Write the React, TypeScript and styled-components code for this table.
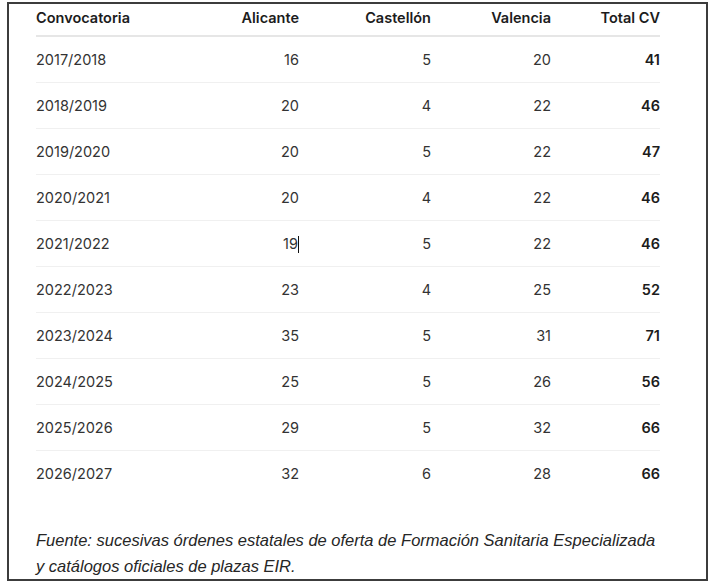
import React from "react";
import styled, { createGlobalStyle } from "styled-components";

const GlobalStyle = createGlobalStyle`
  html, body {
    margin: 0;
    padding: 0;
    background: #ffffff;
  }
  body {
    font-family: Inter, "Noto Sans", "Liberation Sans", sans-serif;
    color: #2b2b2b;
  }
`;

const rows = [
  ["2017/2018", 16, 5, 20, 41],
  ["2018/2019", 20, 4, 22, 46],
  ["2019/2020", 20, 5, 22, 47],
  ["2020/2021", 20, 4, 22, 46],
  ["2021/2022", 19, 5, 22, 46],
  ["2022/2023", 23, 4, 25, 52],
  ["2023/2024", 35, 5, 31, 71],
  ["2024/2025", 25, 5, 26, 56],
  ["2025/2026", 29, 5, 32, 66],
  ["2026/2027", 32, 6, 28, 66],
];

const Frame = styled.div`
  box-sizing: border-box;
  width: 701px;
  height: 579px;
  margin: 2px 0 0 7px;
  border: 2px solid #3c3c3c;
  padding: 0 46px 0 27px;
  display: flex;
  flex-direction: column;
`;

const Table = styled.table`
  width: 624px;
  border-collapse: collapse;
  table-layout: fixed;
  font-size: 14.5px;
`;

const HeadCell = styled.th<{ $left?: boolean }>`
  text-align: ${(p) => (p.$left ? "left" : "right")};
  font-weight: 600;
  color: #1c1c1c;
  line-height: 17px;
  padding: 5px 0 9px;
  border-bottom: 2px solid #e6e6e6;
`;

const Row = styled.tr<{ $last?: boolean }>`
  border-bottom: ${(p) => (p.$last ? "none" : "1px solid #f0f0f0")};
`;

const Cell = styled.td<{ $left?: boolean; $strong?: boolean }>`
  height: 45px;
  padding: 0;
  text-align: ${(p) => (p.$left ? "left" : "right")};
  font-weight: ${(p) => (p.$strong ? 600 : 400)};
  color: ${(p) => (p.$strong ? "#1c1c1c" : "#333333")};
  vertical-align: middle;
`;

const Caret = styled.span`
  display: inline-block;
  width: 0;
  height: 17px;
  border-left: 1.5px solid #111;
  vertical-align: -4px;
`;

const Source = styled.p`
  margin: 31px 0 0;
  width: 630px;
  font-family: "Liberation Sans", Arial, sans-serif;
  font-style: italic;
  font-size: 16.5px;
  line-height: 26px;
  color: #262626;
`;

export default function App() {
  return (
    <>
      <GlobalStyle />
      <Frame>
        <Table>
          <colgroup>
            <col style={{ width: 143 }} />
            <col style={{ width: 120 }} />
            <col style={{ width: 132 }} />
            <col style={{ width: 120 }} />
            <col style={{ width: 109 }} />
          </colgroup>
          <thead>
            <tr>
              <HeadCell $left>Convocatoria</HeadCell>
              <HeadCell>Alicante</HeadCell>
              <HeadCell>Castellón</HeadCell>
              <HeadCell>Valencia</HeadCell>
              <HeadCell>Total CV</HeadCell>
            </tr>
          </thead>
          <tbody>
            {rows.map((r, i) => (
              <Row key={r[0] as string} $last={i === rows.length - 1}>
                <Cell $left>{r[0]}</Cell>
                <Cell>
                  {r[1]}
                  {r[0] === "2021/2022" && <Caret />}
                </Cell>
                <Cell>{r[2]}</Cell>
                <Cell>{r[3]}</Cell>
                <Cell $strong>{r[4]}</Cell>
              </Row>
            ))}
          </tbody>
        </Table>
        <Source>
          Fuente: sucesivas órdenes estatales de oferta de Formación Sanitaria Especializada y catálogos oficiales de plazas EIR.
        </Source>
      </Frame>
    </>
  );
}
